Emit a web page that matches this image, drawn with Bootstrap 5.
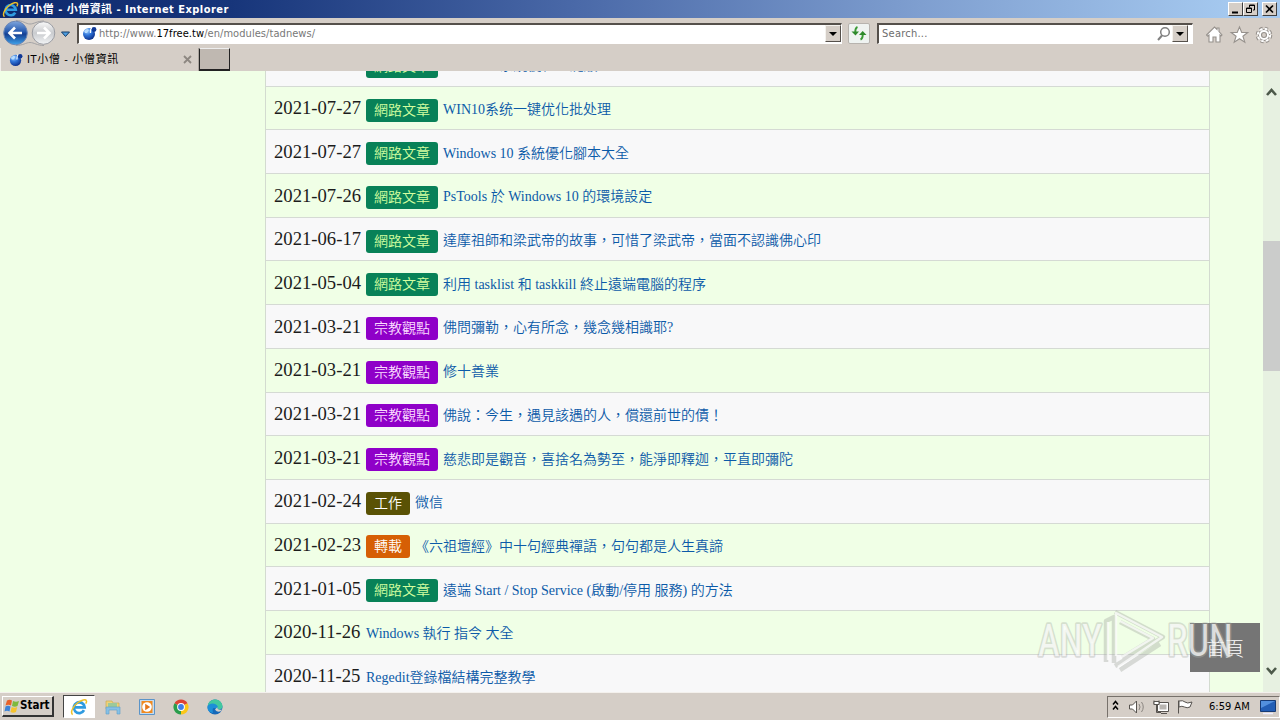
<!DOCTYPE html>
<html lang="zh-Hant">
<head>
    <meta charset="UTF-8">
    <meta name="viewport" content="width=device-width, initial-scale=1.0">
    <title>IT小僧 - 小僧資訊</title>
    <link href="https://cdn.jsdelivr.net/npm/bootstrap@5.3.0/dist/css/bootstrap.min.css" rel="stylesheet">
    <style>
        body {
            width: 1280px;
            height: 720px;
            overflow: hidden;
            background: #d5cec7;
            color: #000;
            font-family: "DejaVu Sans Condensed", "DejaVu Sans", "Noto Sans CJK TC", sans-serif;
            font-stretch: condensed;
            font-size: 11px;
            line-height: 1;
        }
        svg { flex: none; display: block; }
        .text-line { white-space: nowrap; }

        /* window caption */
        .titlebar {
            height: 18px;
            padding: 0 3px 0 2px;
            background: linear-gradient(90deg, #0d296e 0%, #17357a 18%, #4a69a8 45%, #7f9fd0 72%, #a6caf0 97%);
            color: #fff;
            font-weight: bold;
        }
        .titlebar .text-line { font-size: 11px; margin-left: 1px; letter-spacing: .47px; }
        .win-btn {
            width: 15px;
            height: 14px;
            background: #d5cec7;
            border: 1px solid;
            border-color: #fff #404040 #404040 #fff;
        }

        /* address row */
        .toolbar-row { height: 30px; padding-left: 3px; }
        .sunken {
            height: 21px;
            background: #fff;
            border: 1px solid;
            border-color: #55504b #fff #fff #55504b;
            border-width: 2px 1px 1px 2px;
        }
        .address { width: 765px; margin-left: 6px; padding-left: 3px; color: #777; }
        .address .text-line { margin-left: -2px; letter-spacing: .06px; }
        .search { width: 316px; margin-left: 7px; padding-left: 3px; color: #6d6d6d; }
        .search .text-line { letter-spacing: .25px; }
        .drop-btn {
            width: 16px;
            height: 17px;
            background: #d5cec7;
            border: 1px solid;
            border-color: #f4f2ee #55504b #55504b #f4f2ee;
        }
        .refresh {
            width: 22px;
            height: 21px;
            margin-left: 6px;
            background: #eff3f1;
            border: 1px solid #b7b3ae;
            border-radius: 2px;
        }

        /* tabs */
        .tab-row { height: 23px; }
        .page-tab { width: 199px; height: 23px; padding: 0 6px 0 8px; border-right: 1px solid #aaa49d; border-left: 1px solid #f2efeb; }
        .page-tab .text-line { letter-spacing: .65px; }
        .new-tab { width: 31px; height: 23px; background: #bfb8b1; border: 1px solid; border-color: #eee #222 #222 #222; border-bottom-width: 2px; }

        /* page */
        .viewport { height: 621px; background: #f0ffe6; overflow: hidden; }
        .news {
            width: 945px;
            margin-left: 265px;
            border-left: 1px solid #d3dbd0;
            border-right: 1px solid #d3dbd0;
            font-family: "Liberation Serif", "Noto Sans CJK TC", serif;
            font-stretch: normal;
            overflow: hidden;
        }
        .news-row {
            flex: none;
            height: 43.7px;
            padding: 0 8px;
            border-bottom: 1px solid #d5dad4;
            background: #f8f8f9;
        }
        .news-row:nth-child(even) { background: #f0ffe6; }
        .news-row:first-child { margin-top: -28px; }
        .news-date { width: 92px; margin-top: 1px; font-size: 18.67px; color: #1c1c1c; }
        .news-tag {
            height: 23px;
            margin: 4px 5px 0 0;
            padding: 0 8px;
            border-radius: 3px;
            font-size: 14px;
            line-height: 23px;
            font-weight: 350;
            color: #fff;
        }
        .tag-web { background: #088158; color: #d4ffa0; }
        .tag-faith { background: #8f00c8; color: #fbdcff; }
        .tag-work { background: #5a5205; }
        .tag-repost { background: #d65f05; }
        .news-link { margin-top: 4px; font-size: 14px; font-weight: 350; color: #0b5aa8; text-decoration: none; white-space: nowrap; }
        .scroll { width: 17px; margin-left: auto; background: #e7f1e1; }
        .thumb { height: 130px; background: #cbcccb; }

        .home-box {
            position: absolute;
            left: 1190px;
            top: 623px;
            width: 70px;
            height: 49px;
            background: #757575;
            color: #fff;
            font: 300 19px "Noto Sans CJK TC", sans-serif;
        }
        .stamp { position: absolute; left: 1030px; top: 604px; }
        .stamp text { fill: rgba(255, 255, 255, .72); stroke: rgba(169, 173, 168, .38); stroke-width: 3.5px; paint-order: stroke; }

        /* taskbar */
        .taskbar { height: 28px; border-top: 1px solid #f4f1ed; }
        .start-btn {
            width: 52px;
            height: 21px;
            margin-left: 2px;
            padding-left: 1px;
            border: 1px solid;
            border-color: #fff #333 #333 #fff;
            border-width: 1px 2px 2px 1px;
            font-weight: bold;
            font-size: 11.5px;
        }
        .task-item { width: 34px; height: 23px; }
        .task-on { width: 32px; margin: 0 1px 0 9px; background: #fff; border: 1px solid; border-color: #444 #fff #fff #444; }
        .tray { width: 173px; height: 22px; border: 1px solid; border-color: #77716b #fff #fff #77716b; padding: 0 3px 0 4px; }
        .tray .text-line { margin-left: -3px; }
    </style>
</head>
<body>
    <svg width="0" height="0" class="position-absolute">
        <defs>
            <radialGradient id="orb" cx=".35" cy=".25" r=".8">
                <stop offset="0" stop-color="#9fd0ff"/><stop offset=".45" stop-color="#2f74d8"/><stop offset="1" stop-color="#0b2c86"/>
            </radialGradient>
            <linearGradient id="backFill" x2="0" y2="1">
                <stop offset="0" stop-color="#7fa6dd"/><stop offset=".45" stop-color="#2458ae"/><stop offset=".55" stop-color="#153f92"/><stop offset="1" stop-color="#3fa4ec"/>
            </linearGradient>
            <linearGradient id="fwdFill" x2="0" y2="1">
                <stop offset="0" stop-color="#fafafa"/><stop offset=".5" stop-color="#c9cbce"/><stop offset="1" stop-color="#f2f4f6"/>
            </linearGradient>
            <symbol id="ie" viewBox="0 0 18 18">
                <path d="M14 12.200A5.400 5.400 0 1 1 14.600 9.300H5" fill="none" stroke="#2f9be0" stroke-width="2.800"/>
                <path d="M2.600 16.600C-.3 14 3.700 7.600 8 4.500c3.400-2.500 7.700-3.800 8.400-1.800.4 1-.1 2-.7 2.900" fill="none" stroke="#efc128" stroke-width="1.500"/>
            </symbol>
            <symbol id="globe" viewBox="0 0 15 15">
                <circle cx="7" cy="8" r="6" fill="url(#orb)"/>
                <path d="M2 5l3-2 2 1-2 3-2 0z" fill="#b6dcff"/>
                <path d="M8.500 7Q8 3.500 10 1.500" fill="none" stroke="#fff" stroke-width="1.300"/>
                <circle cx="12" cy="3.500" r="2.400" fill="#123995"/>
            </symbol>
        </defs>
    </svg>

    <div class="titlebar d-flex align-items-center">
        <svg width="17" height="17"><use href="#ie"/></svg>
        <span class="text-line">IT小僧 - 小僧資訊 - Internet Explorer</span>
        <div class="d-flex ms-auto">
            <div class="win-btn"><svg width="13" height="12"><path d="M3 9.500h6" stroke="#000" stroke-width="2"/></svg></div>
            <div class="win-btn"><svg width="13" height="12"><path d="M5.500 4.500V2h5v5H9M5 2.500h6M2.500 5h5v4.500h-5zM2 5.500h6" fill="none" stroke="#000"/></svg></div>
            <div class="win-btn ms-1"><svg width="13" height="12"><path d="M3 2.500l7 7M10 2.500l-7 7" stroke="#000" stroke-width="1.700"/></svg></div>
        </div>
    </div>

    <div class="toolbar-row d-flex align-items-center">
        <svg width="68" height="28" viewBox="0 0 68 28">
            <path d="M13 1.500C20 1.500 23 5 27 5s7-3 14-3M13 26.500c7 0 10-3 14-3s7 3 14 3" fill="none" stroke="#a3a3a6"/>
            <circle cx="12.500" cy="14" r="11.800" fill="url(#backFill)" stroke="#6c86b4"/>
            <path d="M19 14H7M12 8.500L6.500 14l5.500 5.500" fill="none" stroke="#fff" stroke-width="2.600"/>
            <circle cx="40.500" cy="14" r="11.300" fill="url(#fwdFill)" stroke="#9b9da3"/>
            <path d="M34 14h12M41 8.500l5.500 5.500-5.500 5.500" fill="none" stroke="#fff" stroke-width="2.600"/>
            <path d="M58.500 13h8l-4 4.500z" fill="#4d9de0" stroke="#173e68"/>
        </svg>
        <div class="address sunken d-flex align-items-center">
            <svg width="15" height="15" class="me-1"><use href="#globe"/></svg>
            <span class="text-line">http://www.<span class="text-black">17free.tw</span>/en/modules/tadnews/</span>
            <div class="drop-btn ms-auto"><svg width="14" height="15"><path d="M3 6h8l-4 4z"/></svg></div>
        </div>
        <div class="refresh"><svg width="20" height="19" viewBox="0 0 20 19"><path d="M8.500 3Q6 4 6.300 9M11.500 15.500Q14 14.500 13.700 9.500" fill="none" stroke="#3a9a35" stroke-width="2"/><path d="M2.500 7.500h7.500L6.500 11.500zM10 11h7.500L13.700 7z" fill="#2f8a2c"/></svg></div>
        <div class="search sunken d-flex align-items-center">
            <span class="text-line">Search...</span>
            <svg width="16" height="16" class="ms-auto"><circle cx="9" cy="6" r="4.300" fill="none" stroke="#808080" stroke-width="1.500"/><path d="M6 9.500L2 14" stroke="#808080" stroke-width="2"/></svg>
            <div class="drop-btn me-1"><svg width="14" height="15"><path d="M3 6h8l-4 4z"/></svg></div>
        </div>
        <svg width="70" height="22" viewBox="0 0 70 22" class="ms-auto me-1">
            <g fill="#fff" stroke="#96918c" stroke-width="1.100">
                <path d="M.5 13L8.500 5l2.500 2.500V6h2v3.500l3 3.500-1 1-1-1v7h-4v-5H7v5H3v-7l-1.500 1z"/>
                <path d="M33.500 5l2.200 5.500h6l-4.800 3.700 1.900 6-5.300-3.500-5.300 3.500 1.900-6-4.900-3.700h6z"/>
                <circle cx="58" cy="13" r="6.500" stroke-width="3.600" stroke-dasharray="3 2.105"/>
                <circle cx="58" cy="13" r="5.600"/>
                <circle cx="58" cy="13" r="6.200" fill="none" stroke="#fff" stroke-width="2" stroke-dasharray="2.600 2.270"/>
                <circle cx="58" cy="13" r="2.500" fill="#d5cec7"/>
            </g>
        </svg>
    </div>

    <div class="tab-row d-flex">
        <div class="page-tab d-flex align-items-center">
            <svg width="14" height="14"><use href="#globe"/></svg>
            <span class="text-line ms-1">IT小僧 - 小僧資訊</span>
            <svg width="9" height="9" class="ms-auto"><path d="M1 1l7 7M8 1L1 8" stroke="#8d8781" stroke-width="1.800"/></svg>
        </div>
        <div class="new-tab"></div>
    </div>

    <main class="viewport d-flex">
        <div class="news d-flex flex-column" id="news"></div>
        <div class="scroll d-flex flex-column align-items-center">
            <svg width="17" height="170"><path d="M4 24l4.500-5 4.500 5" fill="none" stroke="#4d5a4a" stroke-width="2.600"/></svg>
            <div class="thumb w-100"></div>
            <svg width="17" height="20" class="mt-auto mb-2"><path d="M4 4l4.500 5L13 4" fill="none" stroke="#4d5a4a" stroke-width="2.600"/></svg>
        </div>
    </main>

    <footer class="taskbar d-flex align-items-center">
        <div class="start-btn d-flex align-items-center">
            <svg width="16" height="16" viewBox="0 0 16 16">
                <path d="M3 2.500q2.500-1.500 5 0L7 7.500q-2.500-1.500-5.500 0z" fill="#e8622a"/>
                <path d="M9 3q3 1.500 6 0l-1.500 5q-2.500 1.500-5.500 0z" fill="#7fb93c"/>
                <path d="M1.500 8.500q2.500-1.500 5 0l-1 5q-2.500-1.500-5 0z" fill="#3d83d8"/>
                <path d="M7.700 9q2.700 1.500 5.500 0L12 14q-2.700 1.500-5.500 0z" fill="#f7c32c"/>
            </svg>
            <span class="text-line">Start</span>
        </div>
        <div class="task-item task-on d-flex align-items-center justify-content-center"><svg width="18" height="18"><use href="#ie"/></svg></div>
        <div class="task-item d-flex align-items-center justify-content-center">
            <svg width="16" height="16"><path d="M1 2h6l1 2h6v6H1z" fill="#edd27a" stroke="#c6a64a" stroke-width=".6"/><path d="M3 4h9v4H3z" fill="#9cc99a"/><path d="M1 8h14v7h-3v-4H4v4H1z" fill="#86c0e6" stroke="#5d9dc9" stroke-width=".6"/></svg>
        </div>
        <div class="task-item d-flex align-items-center justify-content-center">
            <svg width="16" height="16"><path d="M.5.500h15v15H.5z" fill="#c5dcf0" stroke="#5b94c8"/><path d="M2.500 2h11v12h-11z" fill="#f08a20"/><circle cx="8" cy="8" r="4.800" fill="#fff"/><path d="M6.200 4.800v6.400L11.200 8z" fill="#e5761a"/></svg>
        </div>
        <div class="task-item d-flex align-items-center justify-content-center">
            <svg width="16" height="16"><path d="M8 8L1.500 4.200A7.500 7.500 0 0 1 14.500 4.200z" fill="#dd4334"/><path d="M8 8L1.500 4.200A7.500 7.500 0 0 0 8 15.500z" fill="#2a9d4c"/><path d="M8 8l6.500-3.800A7.500 7.500 0 0 1 8 15.500z" fill="#fbc718"/><circle cx="8" cy="8" r="3.900" fill="#fff"/><circle cx="8" cy="8" r="2.900" fill="#3f7fe8"/></svg>
        </div>
        <div class="task-item d-flex align-items-center justify-content-center">
            <svg width="16" height="16"><circle cx="8" cy="8" r="7.500" fill="#1668b8"/><path d="M.8 7C1.500-1 14-2 15.500 7c.3 3-2.500 4-5.500 3.200C12 7 7 3 .8 7z" fill="#42c8a0"/><path d="M.8 7C3 3 10 4 10.800 8c0 1-.8 1.500-.8 2.200C6 8 5 9 6 14 1 13 0 10 .8 7z" fill="#1d8fd8"/><path d="M10.500 8c-.8 2 1.500 3.500 4.500 2.500-1.500 3-5 3-7 0z" fill="#d5cec7"/></svg>
        </div>
        <div class="tray d-flex align-items-center ms-auto">
            <svg width="100" height="20" viewBox="0 0 100 20">
                <path d="M1 7.500l2.500-3L6 7.500M1 12.500l2.500-3L6 12.500" fill="none" stroke="#000" stroke-width="1.500"/>
                <g fill="#fff" stroke="#57534f">
                    <path d="M17.500 8h3l4-4v12l-4-4h-3z"/>
                    <path d="M27 7q2 3 0 6M29.500 5q3.500 5 0 10" fill="none" stroke="#8a8580"/>
                    <path d="M45.500 5.500h11v9h-11z"/><path d="M47.500 7.500h7v5h-7z" fill="#b9b5b1" stroke="none"/>
                    <path d="M49 16.500h6M42 3.500v4h5v-4M44.500 8v7.500H49" fill="none"/><path d="M42 4.500h5v3h-5z"/>
                    <path d="M66.500 3.500v13M67 4q4-1 6 1t7 0l-2 5q-3 1.500-5.500 0T67 10z"/>
                </g>
            </svg>
            <span class="text-line">6:59 AM</span>
            <svg width="16" height="16" class="ms-auto"><path d="M.5 1.500h15v11H.5z" fill="#235eb5" stroke="#173b75"/><path d="M1 2h14L1 9z" fill="#5390dd"/><path d="M3 14.500h10" stroke="#eef" stroke-width="1.500"/></svg>
        </div>
    </footer>

    <div class="home-box d-flex align-items-center justify-content-center">首頁</div>
    <svg class="stamp" width="210" height="74" viewBox="0 0 210 74">
        <g font-family="Roboto, sans-serif" font-size="44" stroke-linejoin="round">
            <path d="M76 58V17l8-4v46M85 8l48 25-48 29M90 66l40-26M92 54l31-19-33-17" fill="none" stroke="#a9ada8" stroke-width="4.500" opacity=".42"/>
            <text x="8" y="52" textLength="64" lengthAdjust="spacingAndGlyphs">ANY</text>
            <text x="137" y="52" textLength="66" lengthAdjust="spacingAndGlyphs">RUN</text>
            <path d="M78 56V18M86 52V9l46 24-44 30M90 17l33 17-33 20" fill="none" stroke="#fff" stroke-width="2.400" opacity=".7"/>
        </g>
    </svg>

    <script>
        const tags = {
            web: "網路文章",
            faith: "宗教觀點",
            work: "工作",
            repost: "轉載"
        };
        const rows = [
            ["2021-07-28", "web", "Windows 系統優化一鍵版"],
            ["2021-07-27", "web", "WIN10系统一键优化批处理"],
            ["2021-07-27", "web", "Windows 10 系統優化腳本大全"],
            ["2021-07-26", "web", "PsTools 於 Windows 10 的環境設定"],
            ["2021-06-17", "web", "達摩祖師和梁武帝的故事，可惜了梁武帝，當面不認識佛心印"],
            ["2021-05-04", "web", "利用 tasklist 和 taskkill 終止遠端電腦的程序"],
            ["2021-03-21", "faith", "佛問彌勒，心有所念，幾念幾相識耶?"],
            ["2021-03-21", "faith", "修十善業"],
            ["2021-03-21", "faith", "佛說：今生，遇見該遇的人，償還前世的債！"],
            ["2021-03-21", "faith", "慈悲即是觀音，喜捨名為勢至，能淨即釋迦，平直即彌陀"],
            ["2021-02-24", "work", "微信"],
            ["2021-02-23", "repost", "《六祖壇經》中十句經典禪語，句句都是人生真諦"],
            ["2021-01-05", "web", "遠端 Start / Stop Service (啟動/停用 服務) 的方法"],
            ["2020-11-26", "", "Windows 執行 指令 大全"],
            ["2020-11-25", "", "Regedit登錄檔結構完整教學"]
        ];
        document.getElementById("news").innerHTML = rows.map(([date, tag, title]) => `
            <div class="news-row d-flex align-items-center">
                <span class="news-date">${date}</span>
                ${tag ? `<span class="news-tag tag-${tag}">${tags[tag]}</span>` : ""}
                <a class="news-link" href="#">${title}</a>
            </div>`).join("");
    </script>
    <script src="https://cdn.jsdelivr.net/npm/bootstrap@5.3.0/dist/js/bootstrap.bundle.min.js"></script>
</body>
</html>
